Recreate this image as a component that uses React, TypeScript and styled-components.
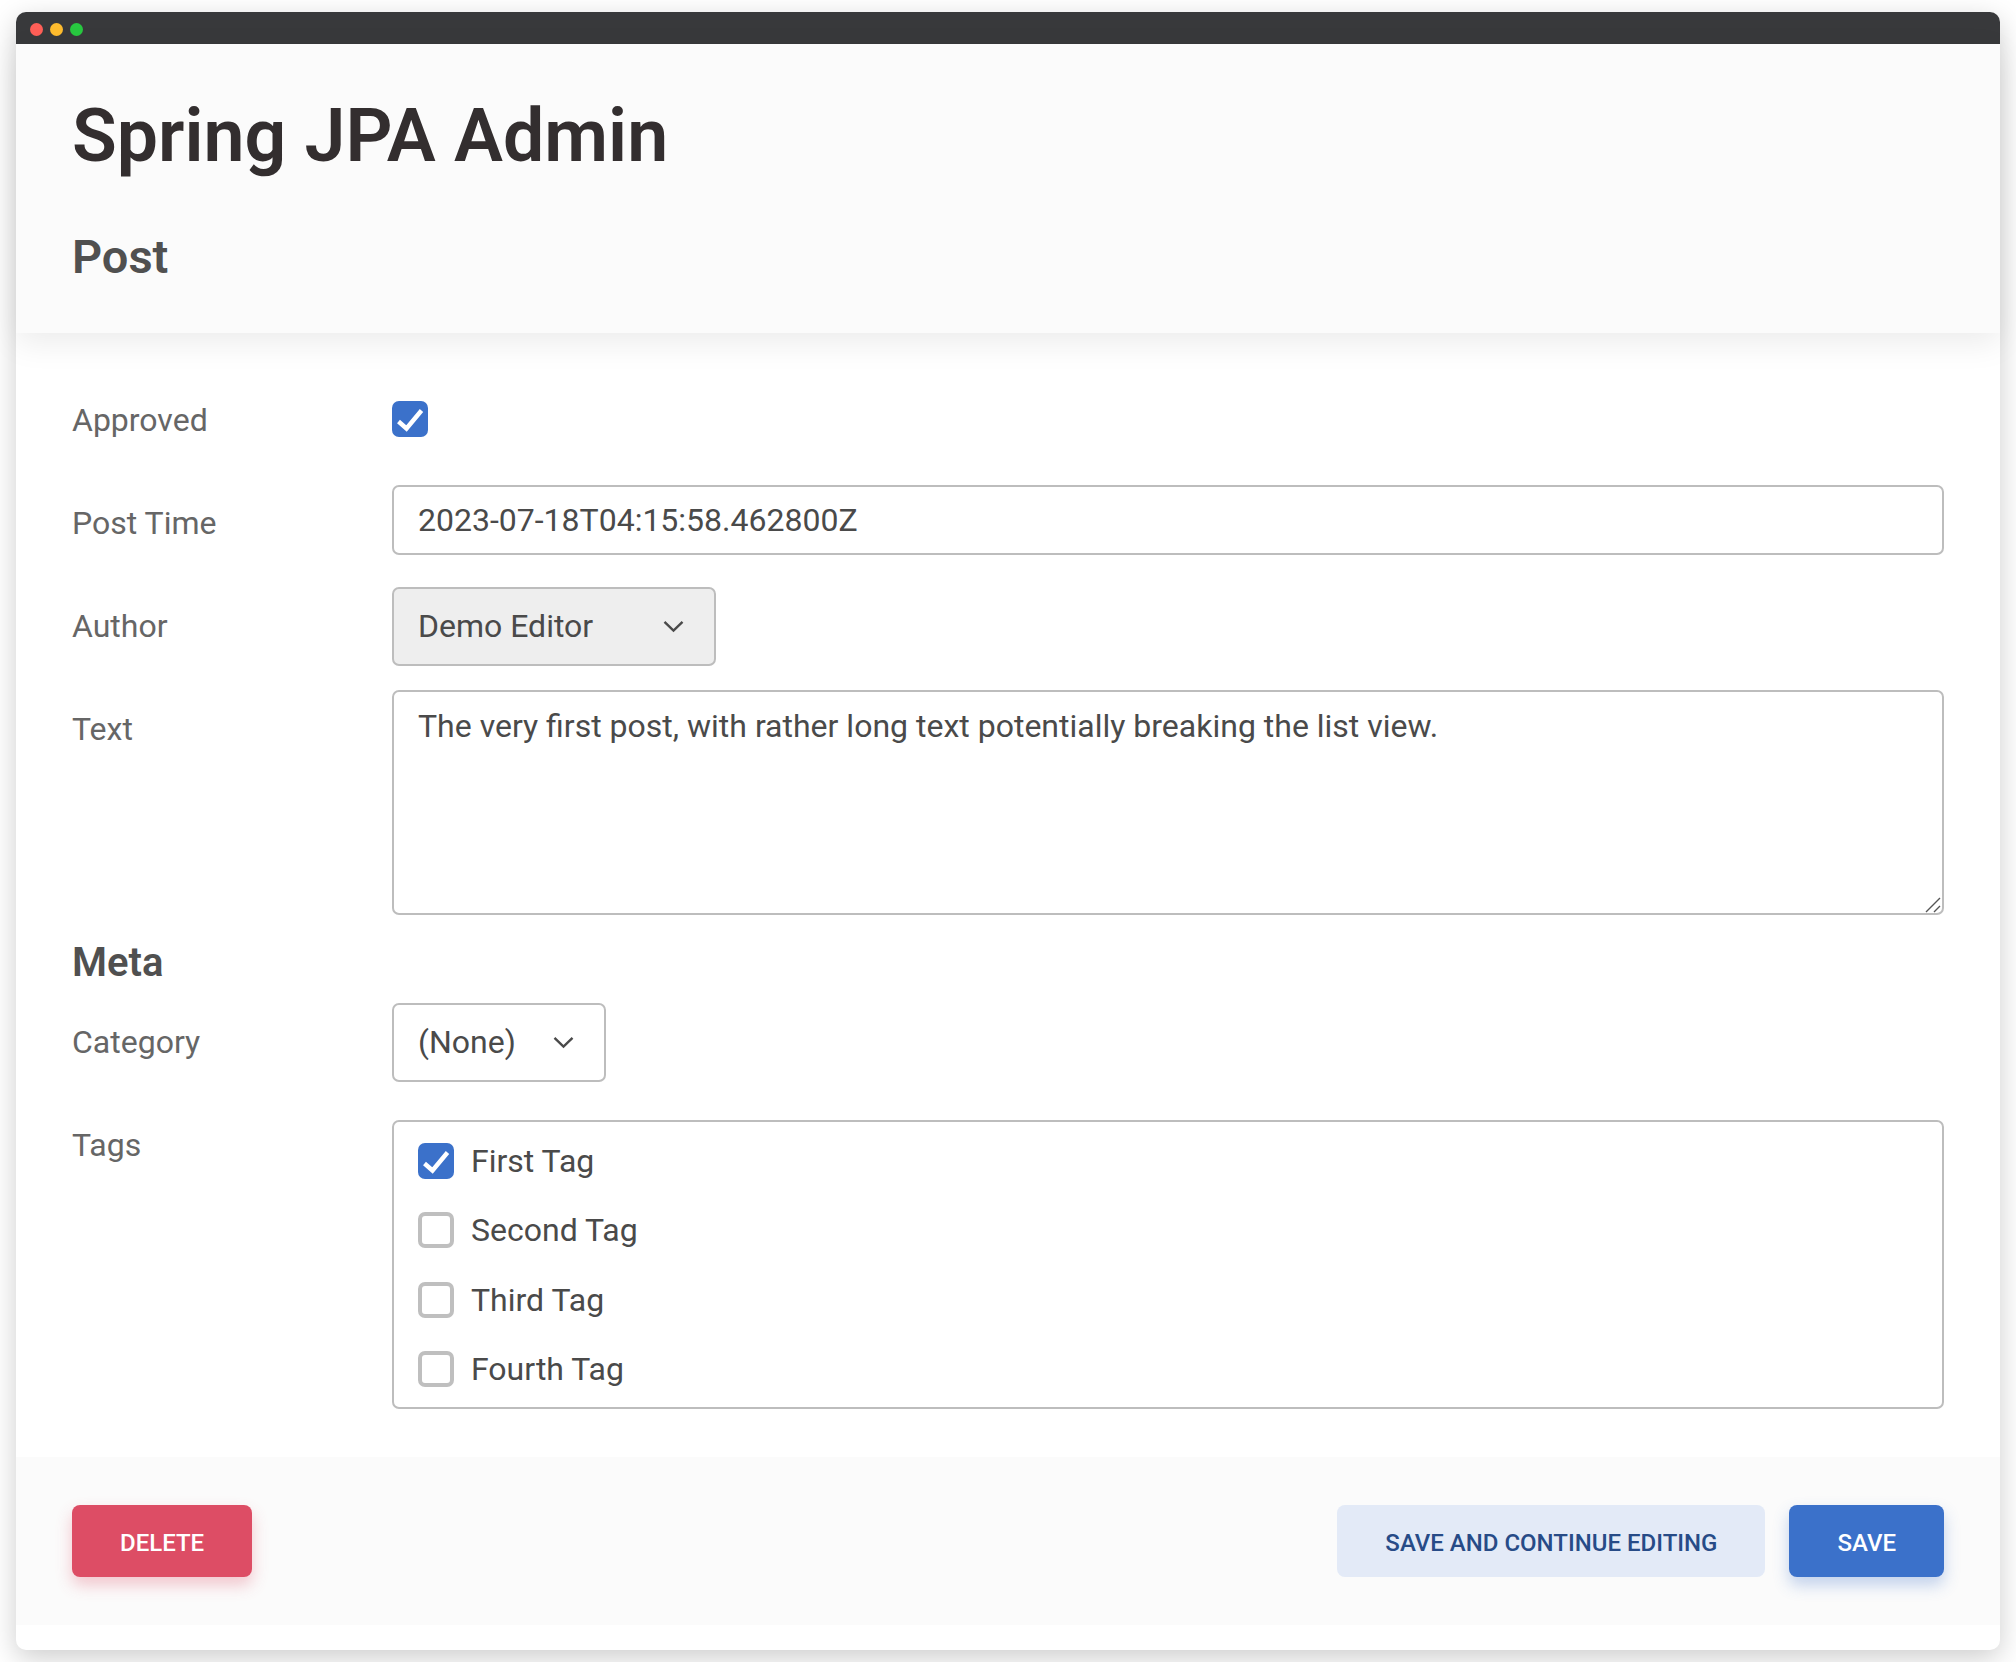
import styled, { createGlobalStyle } from "styled-components";

const GlobalStyle = createGlobalStyle`
  html, body {
    margin: 0;
    padding: 0;
    background: #fff;
  }
  * {
    box-sizing: border-box;
  }
`;

const Page = styled.div`
  height: 1662px;
  padding: 12px 16px;
  overflow: hidden;
  font-family: Roboto, "Liberation Sans", sans-serif;
`;

const Window = styled.div`
  height: 1638px;
  background: #fff;
  border-radius: 10px;
  box-shadow: 0 8px 28px rgba(0, 0, 0, 0.2);
`;

const TitleBar = styled.div`
  height: 32px;
  background: #38393b;
  border-radius: 10px 10px 0 0;
  display: flex;
  align-items: center;
  gap: 7px;
  padding: 2px 0 0 14px;
`;

const Dot = styled.span<{ $color: string }>`
  width: 13px;
  height: 13px;
  border-radius: 50%;
  background: ${(p) => p.$color};
`;

const Header = styled.header`
  position: relative;
  height: 289px;
  padding: 49px 56px 0;
  background: #fbfbfb;
  box-shadow: 0 10px 30px rgba(0, 0, 0, 0.08);
`;

const Title = styled.h1`
  margin: 0;
  font-size: 73.4px;
  line-height: 86px;
  font-weight: 600;
  color: #332e2f;
`;

const Subtitle = styled.h2`
  margin: 51px 0 0;
  font-size: 47px;
  line-height: 54px;
  font-weight: 600;
  color: #505050;
`;

const Form = styled.form`
  padding: 68px 56px 0;
`;

const Row = styled.div<{ $gap: number }>`
  display: grid;
  grid-template-columns: 320px 1fr;
  align-items: start;
  margin-bottom: ${(p) => p.$gap}px;
`;

const Label = styled.label<{ $top: number }>`
  padding-top: ${(p) => p.$top}px;
  font-size: 32px;
  line-height: 36px;
  color: #666;
`;

const CheckBox = styled.span<{ $checked?: boolean }>`
  display: block;
  flex: none;
  width: 36px;
  height: 36px;
  border-radius: 7px;
  background: ${(p) => (p.$checked ? "#3b71ca" : "#fff")};
  border: ${(p) => (p.$checked ? "none" : "4px solid #bfbfbf")};
`;

const TextInput = styled.input`
  display: block;
  width: 100%;
  height: 70px;
  padding: 0 24px;
  border: 2px solid #bdbdbd;
  border-radius: 7px;
  outline: none;
  background: #fff;
  font: 400 32px Roboto, "Liberation Sans", sans-serif;
  color: #4a4a4a;
`;

const TextAreaWrap = styled.div`
  position: relative;
`;

const TextArea = styled.textarea`
  display: block;
  width: 100%;
  height: 225px;
  padding: 16px 24px;
  border: 2px solid #bdbdbd;
  border-radius: 7px;
  outline: none;
  resize: none;
  background: #fff;
  font: 400 32px/36px Roboto, "Liberation Sans", sans-serif;
  color: #4a4a4a;
`;

const ResizeGrip = styled.svg`
  position: absolute;
  right: 3px;
  bottom: 2px;
`;

const SelectBox = styled.div<{ $disabled?: boolean; $width: number }>`
  display: flex;
  align-items: center;
  justify-content: space-between;
  width: ${(p) => p.$width}px;
  height: 79px;
  padding: 0 30px 2px 24px;
  border: 2px solid #bdbdbd;
  border-radius: 7px;
  background: ${(p) => (p.$disabled ? "#eee" : "#fff")};
  font-size: 32px;
  color: #4a4a4a;

  svg {
    margin-top: 2px;
  }
`;

const SectionTitle = styled.h3`
  margin: 0 0 17px;
  font-size: 40px;
  line-height: 46px;
  font-weight: 600;
  color: #505050;
`;

const TagBox = styled.div`
  height: 289px;
  padding: 21px 24px 0;
  border: 2px solid #bdbdbd;
  border-radius: 7px;
  display: flex;
  flex-direction: column;
  gap: 33.3px;
`;

const TagRow = styled.div`
  display: flex;
  align-items: center;
  gap: 17px;
  height: 36px;
  font-size: 32px;
  color: #4a4a4a;
`;

const Footer = styled.footer`
  display: flex;
  justify-content: space-between;
  margin-top: 48px;
  padding: 48px 56px;
  background: #fbfbfb;
`;

const FooterRight = styled.div`
  display: flex;
  gap: 24px;
`;

type Tone = "danger" | "soft" | "primary";

const toneStyles: Record<Tone, string> = {
  danger: "background: #dd4d65; color: #fff; box-shadow: 0 8px 16px rgba(221, 77, 101, 0.3);",
  soft: "background: #e3eaf7; color: #274b87;",
  primary: "background: #3b71ca; color: #fff; box-shadow: 0 8px 16px rgba(59, 113, 202, 0.3);",
};

const Button = styled.button<{ $tone: Tone }>`
  height: 72px;
  padding: 3px 48px 0;
  border: none;
  border-radius: 8px;
  font: 500 24px Roboto, "Liberation Sans", sans-serif;
  ${(p) => toneStyles[p.$tone]}
`;

const Check = ({ checked }: { checked?: boolean }) => (
  <CheckBox $checked={checked}>
    {checked && (
      <svg width="36" height="36" viewBox="0 0 36 36" fill="none">
        <path d="M6.5 20.5 L14.5 27.5 L29.5 9.5" stroke="#fff" strokeWidth="4.4" />
      </svg>
    )}
  </CheckBox>
);

const Chevron = () => (
  <svg width="21" height="13" viewBox="0 0 21 13" fill="none">
    <path d="M1.5 1.8 L10.5 10.5 L19.5 1.8" stroke="#4a4a4a" strokeWidth="2.4" />
  </svg>
);

const TAGS = [
  { name: "First Tag", checked: true },
  { name: "Second Tag" },
  { name: "Third Tag" },
  { name: "Fourth Tag" },
];

const App = () => {
  return (
    <Page>
      <GlobalStyle />
      <Window>
        <TitleBar>
          <Dot $color="#ff5f57" />
          <Dot $color="#febc2e" />
          <Dot $color="#28c840" />
        </TitleBar>
        <Header>
          <Title>Spring JPA Admin</Title>
          <Subtitle>Post</Subtitle>
        </Header>
        <Form>
          <Row $gap={47}>
            <Label $top={1}>Approved</Label>
            <Check checked />
          </Row>
          <Row $gap={32}>
            <Label $top={20}>Post Time</Label>
            <TextInput readOnly value="2023-07-18T04:15:58.462800Z" />
          </Row>
          <Row $gap={24}>
            <Label $top={21}>Author</Label>
            <SelectBox $disabled $width={324}>
              Demo Editor
              <Chevron />
            </SelectBox>
          </Row>
          <Row $gap={25}>
            <Label $top={21}>Text</Label>
            <TextAreaWrap>
              <TextArea readOnly value="The very first post, with rather long text potentially breaking the list view." />
              <ResizeGrip width="16" height="16" viewBox="0 0 16 16" fill="none">
                <path d="M1 15 L15 1 M9 15 L15 9" stroke="#555" strokeWidth="1.4" />
              </ResizeGrip>
            </TextAreaWrap>
          </Row>
          <SectionTitle>Meta</SectionTitle>
          <Row $gap={38}>
            <Label $top={21}>Category</Label>
            <SelectBox $width={214}>
              (None)
              <Chevron />
            </SelectBox>
          </Row>
          <Row $gap={0}>
            <Label $top={7}>Tags</Label>
            <TagBox>
              {TAGS.map((tag) => (
                <TagRow key={tag.name}>
                  <Check checked={tag.checked} />
                  {tag.name}
                </TagRow>
              ))}
            </TagBox>
          </Row>
        </Form>
        <Footer>
          <Button $tone="danger">DELETE</Button>
          <FooterRight>
            <Button $tone="soft">SAVE AND CONTINUE EDITING</Button>
            <Button $tone="primary">SAVE</Button>
          </FooterRight>
        </Footer>
      </Window>
    </Page>
  );
};

export default App;
